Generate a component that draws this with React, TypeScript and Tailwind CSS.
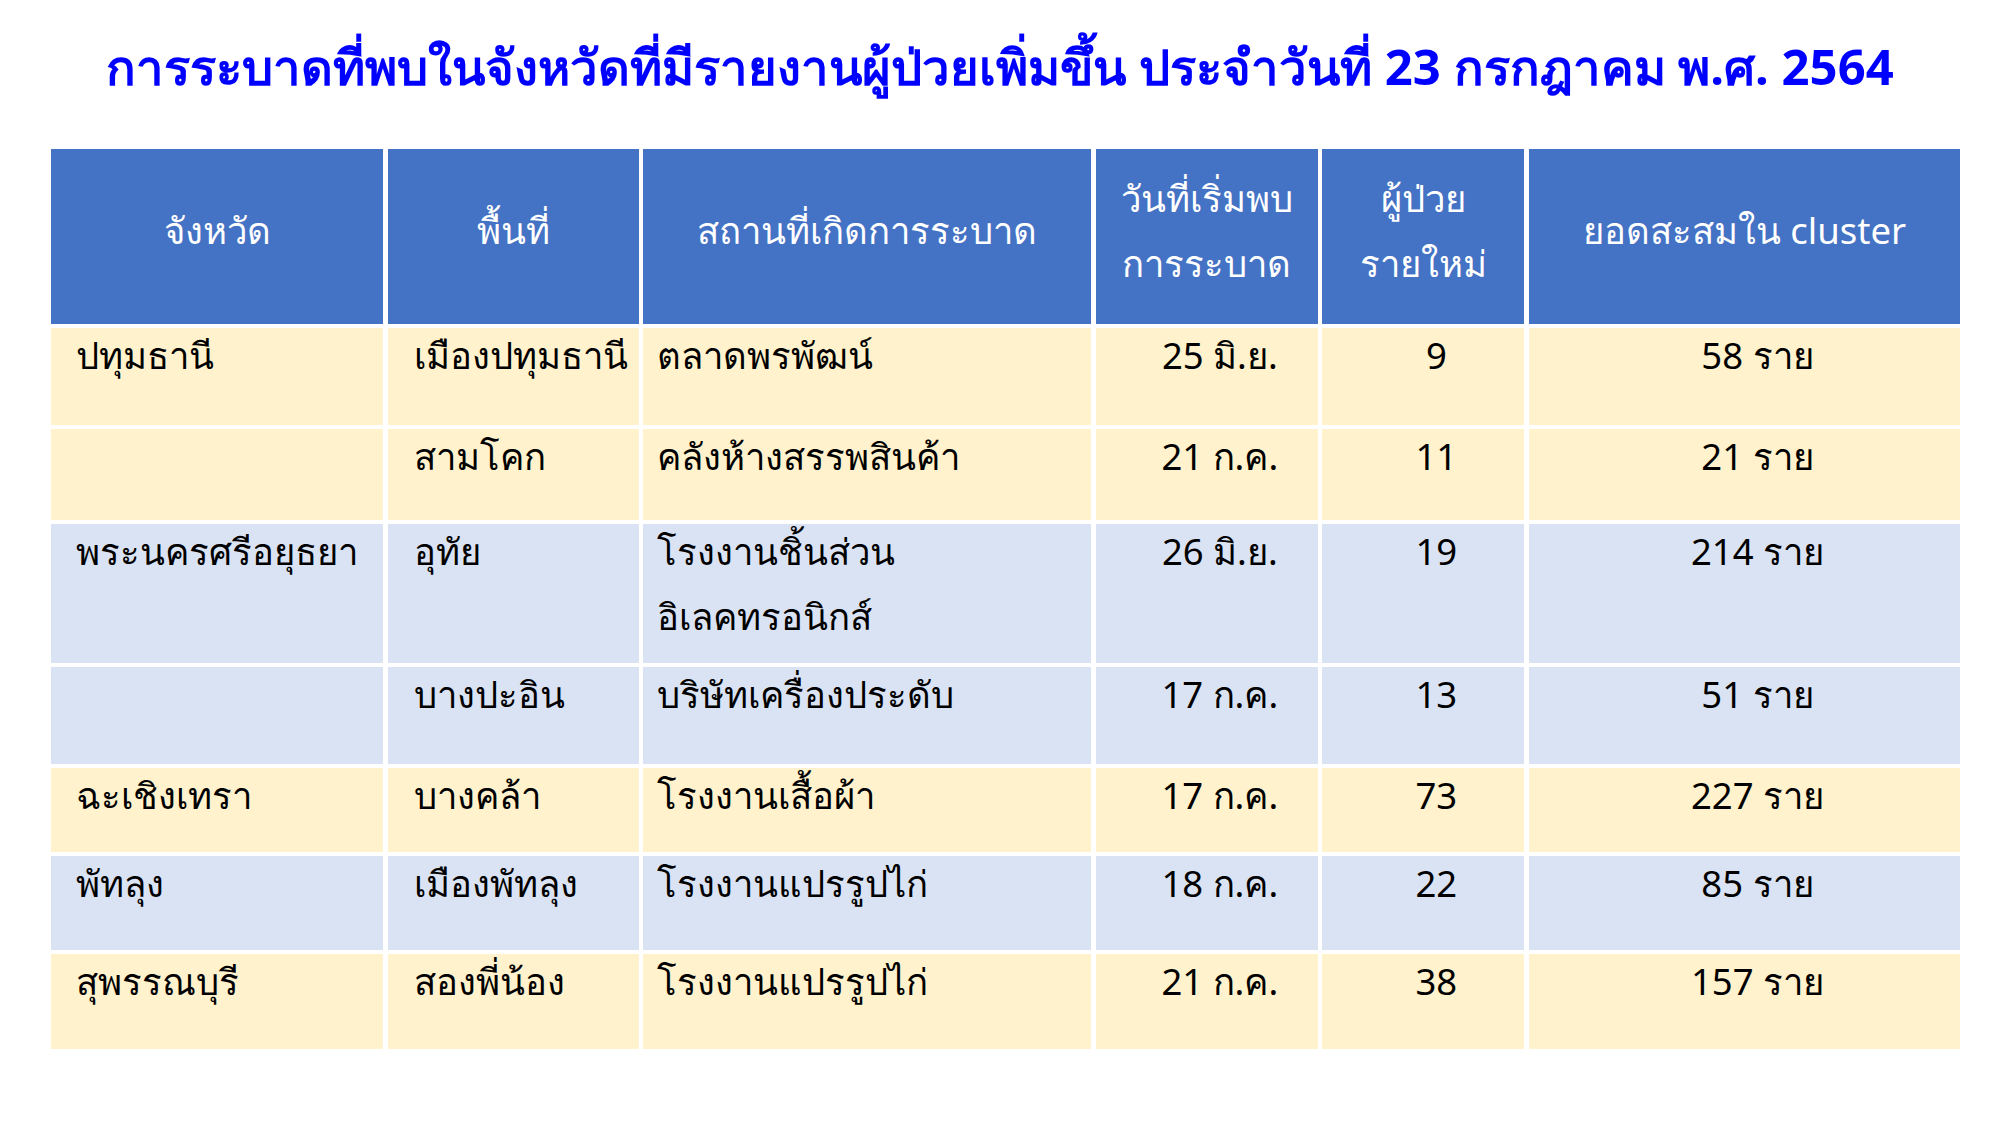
const rows = [
  { c: "y", h: "h-[97px]", p: "ปทุมธานี", a: "เมืองปทุมธานี", s: ["ตลาดพรพัฒน์"], d: "25 มิ.ย.", n: "9", t: "58 ราย" },
  { c: "y", h: "h-[91px]", p: "", a: "สามโคก", s: ["คลังห้างสรรพสินค้า"], d: "21 ก.ค.", n: "11", t: "21 ราย" },
  { c: "b", h: "h-[139px]", p: "พระนครศรีอยุธยา", a: "อุทัย", s: ["โรงงานชิ้นส่วน", "อิเลคทรอนิกส์"], d: "26 มิ.ย.", n: "19", t: "214 ราย" },
  { c: "b", h: "h-[97px]", p: "", a: "บางปะอิน", s: ["บริษัทเครื่องประดับ"], d: "17 ก.ค.", n: "13", t: "51 ราย" },
  { c: "y", h: "h-[84px]", p: "ฉะเชิงเทรา", a: "บางคล้า", s: ["โรงงานเสื้อผ้า"], d: "17 ก.ค.", n: "73", t: "227 ราย" },
  { c: "b", h: "h-[94px]", p: "พัทลุง", a: "เมืองพัทลุง", s: ["โรงงานแปรรูปไก่"], d: "18 ก.ค.", n: "22", t: "85 ราย" },
  { c: "y", h: "h-[95px]", p: "สุพรรณบุรี", a: "สองพี่น้อง", s: ["โรงงานแปรรูปไก่"], d: "21 ก.ค.", n: "38", t: "157 ราย" },
];

const headers = [["จังหวัด"], ["พื้นที่"], ["สถานที่เกิดการระบาด"], ["วันที่เริ่มพบ", "การระบาด"], ["ผู้ป่วย", "รายใหม่"], ["ยอดสะสมใน cluster"]];

export default function App() {
  return (
    <div className="w-[2000px] h-[1125px] bg-white font-['Tahoma','Noto_Sans','DejaVu_Sans',sans-serif]">
      <h1 className="h-[149px] pt-[34px] text-center text-[49px] leading-[64px] font-bold text-[#0000ff]">
        การระบาดที่พบในจังหวัดที่มีรายงานผู้ป่วยเพิ่มขึ้น ประจำวันที่ 23 กรกฎาคม พ.ศ. 2564
      </h1>
      <div className="ml-[51px] grid grid-cols-[332px_251px_448px_222px_202px_431px] gap-x-[4.6px] gap-y-[4px] text-[36.5px] leading-[65px]">
        {headers.map((h, i) => (
          <div key={i} className="h-[175px] pb-[12px] bg-[#4472c4] text-white flex flex-col items-center justify-center">
            {h.map((l) => (
              <span key={l}>{l}</span>
            ))}
          </div>
        ))}
        {rows.map((r, i) => {
          const bg = r.c === "y" ? "bg-[#fff2cc]" : "bg-[#dae3f3]";
          const cell = `${r.h} ${bg} text-black`;
          return [
            <div key={i + "p"} className={`${cell} pl-[25px]`}><div className="-mt-[5px]">{r.p}</div></div>,
            <div key={i + "a"} className={`${cell} pl-[26px]`}><div className="-mt-[5px]">{r.a}</div></div>,
            <div key={i + "s"} className={`${cell} pl-[14px]`}>
              <div className="-mt-[5px] flex flex-col">
                {r.s.map((l) => (
                  <span key={l}>{l}</span>
                ))}
              </div>
            </div>,
            <div key={i + "d"} className={`${cell} pl-[26px] text-center`}><div className="-mt-[5px]">{r.d}</div></div>,
            <div key={i + "n"} className={`${cell} pl-[26px] text-center`}><div className="-mt-[5px]">{r.n}</div></div>,
            <div key={i + "t"} className={`${cell} pl-[26px] text-center`}><div className="-mt-[5px]">{r.t}</div></div>,
          ];
        })}
      </div>
    </div>
  );
}
